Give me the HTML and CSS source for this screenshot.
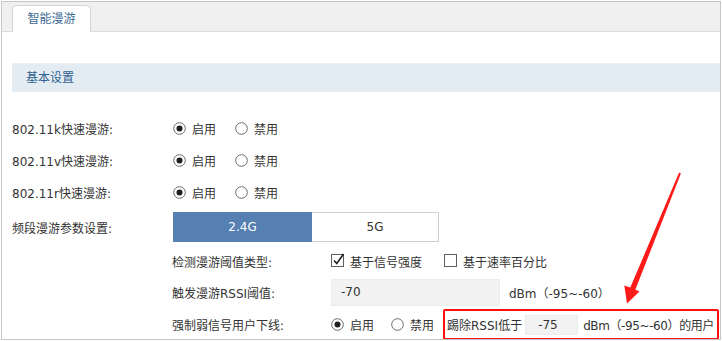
FILE: index.html
```html
<!DOCTYPE html>
<html lang="zh-CN">
<head>
<meta charset="utf-8">
<title>智能漫游</title>
<link rel="stylesheet" href="styles.css">
</head>
<body>
<div class="frame">
  <div class="tabbar"><div class="tab">智能漫游</div></div>
  <div class="section-head">基本设置</div>
  <div class="form">
    <div class="row">
      <div class="lbl">802.11k快速漫游:</div>
      <div class="ctrl">
        <span class="opt"><svg class="radio" viewBox="0 0 13 13"><circle cx="6.5" cy="6.5" r="5.8"/><circle class="dot" cx="6.5" cy="6.5" r="3"/></svg>启用</span>
        <span class="opt"><svg class="radio" viewBox="0 0 13 13"><circle cx="6.5" cy="6.5" r="5.8"/></svg>禁用</span>
      </div>
    </div>
    <div class="row">
      <div class="lbl">802.11v快速漫游:</div>
      <div class="ctrl">
        <span class="opt"><svg class="radio" viewBox="0 0 13 13"><circle cx="6.5" cy="6.5" r="5.8"/><circle class="dot" cx="6.5" cy="6.5" r="3"/></svg>启用</span>
        <span class="opt"><svg class="radio" viewBox="0 0 13 13"><circle cx="6.5" cy="6.5" r="5.8"/></svg>禁用</span>
      </div>
    </div>
    <div class="row">
      <div class="lbl">802.11r快速漫游:</div>
      <div class="ctrl">
        <span class="opt"><svg class="radio" viewBox="0 0 13 13"><circle cx="6.5" cy="6.5" r="5.8"/><circle class="dot" cx="6.5" cy="6.5" r="3"/></svg>启用</span>
        <span class="opt"><svg class="radio" viewBox="0 0 13 13"><circle cx="6.5" cy="6.5" r="5.8"/></svg>禁用</span>
      </div>
    </div>
    <div class="row seg-row">
      <div class="lbl">频段漫游参数设置:</div>
      <div class="seg">
        <div class="seg-item active">2.4G</div>
        <div class="seg-item">5G</div>
      </div>
    </div>
    <div class="sub">
      <div class="srow r5">
        <div class="slbl">检测漫游阈值类型:</div>
        <div class="ctrl">
          <span class="opt chk"><svg class="checkbox" viewBox="0 0 14 14"><rect x="0.5" y="1.5" width="12" height="12"/><path d="M3 7.5 L5.8 10.5 L12.5 1"/></svg>基于信号强度</span>
          <span class="opt chk"><svg class="checkbox" viewBox="0 0 14 14"><rect x="0.5" y="1.5" width="12" height="12"/></svg>基于速率百分比</span>
        </div>
      </div>
      <div class="srow r6">
        <div class="slbl">触发漫游RSSI阈值:</div>
        <div class="ctrl">
          <div class="inp wide">-70</div>
          <span class="unit">dBm（-95~-60）</span>
        </div>
      </div>
      <div class="srow r7">
        <div class="slbl">强制弱信号用户下线:</div>
        <div class="ctrl">
          <span class="opt tight"><svg class="radio" viewBox="0 0 13 13"><circle cx="6.5" cy="6.5" r="5.8"/><circle class="dot" cx="6.5" cy="6.5" r="3"/></svg>启用</span>
          <span class="opt tight last"><svg class="radio" viewBox="0 0 13 13"><circle cx="6.5" cy="6.5" r="5.8"/></svg>禁用</span>
          <div class="redbox">
            <span>踢除RSSI低于</span>
            <div class="inp small">-75</div>
            <span class="tail">dBm（-95~-60）的用户</span>
          </div>
        </div>
      </div>
    </div>
  </div>
</div>
<svg class="arrow" width="722" height="341" viewBox="0 0 722 341">
  <polygon points="679.1,172.6 680.9,173.4 635.3,289.8 639.5,291.5 627,303.5 624.3,285.5 630.3,287.6"/>
</svg>
</body>
</html>
```

FILE: styles.css
```css
html, body {
  margin: 0;
  padding: 0;
  background: #fff;
}
body {
  font-family: "DejaVu Sans", "Noto Sans CJK SC", sans-serif;
  font-size: 12px;
  color: #333;
  width: 722px;
  height: 341px;
  overflow: hidden;
}
.frame {
  box-sizing: border-box;
  margin: 1px 0 0 1px;
  width: 720px;
  height: 339px;
  border: 1px solid #c6c6c6;
  overflow: hidden;
}
.tabbar {
  height: 29px;
  background: #f0f0f0;
  border-bottom: 1px solid #dcdcdc;
  display: flex;
  align-items: flex-end;
  padding-left: 10px;
}
.tab {
  box-sizing: border-box;
  width: 79px;
  height: 27px;
  margin-bottom: -1px;
  background: #fff;
  border: 1px solid #d6d6d6;
  border-bottom: none;
  border-radius: 5px 5px 0 0;
  color: #3b6894;
  text-align: center;
  line-height: 24px;
  font-family: "Noto Sans CJK SC", sans-serif;
}
.section-head {
  margin: 31px 0 0 10px;
  height: 28px;
  border-top: 1px solid #ebf0f5;
  background: #e3ebf3;
  color: #2f6290;
  line-height: 28px;
  padding-left: 14px;
}
.form {
  padding: 20px 0 0 10px;
}
.row {
  display: flex;
  align-items: center;
  height: 32px;
}
.lbl {
  width: 161px;
  flex: none;
}
.ctrl {
  display: flex;
  align-items: center;
  white-space: nowrap;
}
.opt {
  display: inline-flex;
  align-items: center;
  flex: none;
  white-space: nowrap;
  margin-right: 19px;
}
.radio {
  width: 13px;
  height: 13px;
  margin-right: 6px;
  flex: none;
}
.radio circle {
  fill: #fff;
  stroke: #6a6a6a;
  stroke-width: 1;
}
.radio circle.dot {
  fill: #1e1e1e;
  stroke: none;
}
.seg-row {
  height: 38px;
}
.seg {
  display: flex;
  height: 30px;
}
.seg-item {
  box-sizing: border-box;
  height: 30px;
  line-height: 30px;
  text-align: center;
}
.seg-item.active {
  width: 139px;
  background: #5580b1;
  color: #fff;
}
.seg-item:not(.active) {
  width: 127px;
  background: #fff;
  border: 1px solid #cfcfcf;
  border-left: none;
  line-height: 28px;
}
.sub {
  padding-left: 160px;
}
.srow {
  display: flex;
  align-items: center;
}
.r5 { height: 30px; }
.r6 { height: 32px; }
.r7 { height: 32px; }
.slbl {
  width: 159px;
  flex: none;
}
.chk {
  margin-right: 22px;
}
.checkbox {
  width: 14px;
  height: 14px;
  margin-right: 5px;
  margin-top: -2px;
  flex: none;
}
.checkbox rect {
  fill: #fff;
  stroke: #5e5e5e;
  stroke-width: 1;
}
.checkbox path {
  fill: none;
  stroke: #1e1e1e;
  stroke-width: 1.6;
}
.inp {
  box-sizing: border-box;
  flex: none;
  background: #f2f2f2;
  border: 1px solid #ebebeb;
}
.inp.wide {
  width: 169px;
  height: 27px;
  line-height: 25px;
  padding-left: 9px;
  margin-right: 9px;
}
.inp.small {
  width: 53px;
  height: 20px;
  line-height: 18px;
  padding-left: 12px;
  margin: 0 5px 0 3px;
}
.tail {
  letter-spacing: -0.4px;
}
.opt.tight {
  margin-right: 17px;
}
.opt.tight.last {
  margin-right: 9px;
}
.redbox {
  box-sizing: border-box;
  flex: none;
  display: flex;
  align-items: center;
  height: 31px;
  width: 276px;
  border: 2px solid #ff1010;
  border-radius: 2px;
  padding: 1px 0 0 2px;
  white-space: nowrap;
}
.arrow {
  position: absolute;
  left: 0;
  top: 0;
  pointer-events: none;
}
.arrow polygon {
  fill: #ff1a1a;
}
```
